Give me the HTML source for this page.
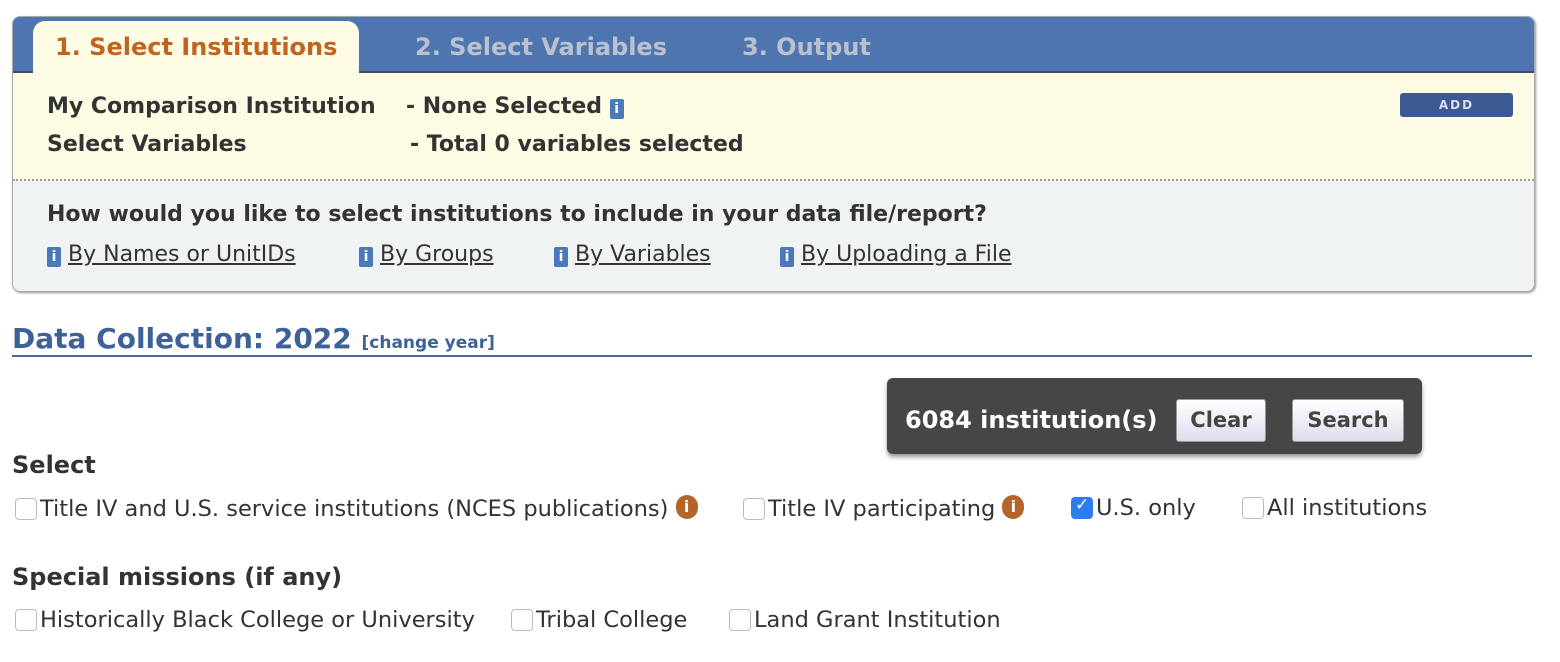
<!DOCTYPE html>
<html><head><style>
body{margin:0;width:1560px;height:662px;background:#fff;font-family:"DejaVu Sans","Liberation Sans",sans-serif;color:#333;position:relative;overflow:hidden}
.a{position:absolute;white-space:nowrap}
.b{font-weight:bold}
.box{position:absolute;left:12px;top:16px;width:1521px;height:274px;border:1px solid #aaa;border-radius:8px;overflow:hidden;background:#f0f3f4;box-shadow:1px 1px 2px #999}
.hdr{position:absolute;left:0;top:0;width:100%;height:54px;background:#4f75b0;border-bottom:2px solid #3a4f6e}
.tab{position:absolute;left:20px;top:4px;width:326px;height:54px;background:#fffce6;border-radius:12px 12px 0 0}
.yel{position:absolute;left:0;top:56px;width:100%;height:106px;background:#fffce6;border-bottom:2px dotted #999}
.ii{display:inline-block;width:14px;height:20px;background:#4a78b9;border-radius:2px;color:#fff;font-size:14px;line-height:20px;text-align:center;font-weight:bold;vertical-align:0}
.oi{display:inline-block;width:22px;height:24px;background:#b5642c;border-radius:11px;color:#fff;font-size:16px;line-height:24px;text-align:center;font-weight:bold}
.cb{display:inline-block;position:relative;width:20px;height:20px;border:1px solid #bbb;border-radius:4px;background:#fff;vertical-align:-4px;margin-right:3px}
a{color:#333}
.btn{position:absolute;top:399px;height:41px;background:linear-gradient(#fff,#dde);border:1px solid #999;border-radius:3px;font-weight:bold;font-size:21px;color:#444;text-align:center;line-height:40px}
.t{font-size:22.5px}
</style></head><body>
<div class="box">
 <div class="hdr"></div>
 <div class="tab"></div>
 <div class="yel"></div>
 <div class="a b" style="left:42px;top:16px;font-size:24px;color:#c0651f">1. Select Institutions</div>
 <div class="a b" style="left:402px;top:16px;font-size:24px;color:#b9c2cc">2. Select Variables</div>
 <div class="a b" style="left:729px;top:16px;font-size:24px;color:#b9c2cc">3. Output</div>
 <div class="a b" style="left:34px;top:77px;font-size:22px">My Comparison Institution</div>
 <div class="a b" style="left:393px;top:77px;font-size:22px">- None Selected <span class="ii">i</span></div>
 <div class="a b" style="left:34px;top:115px;font-size:22px">Select Variables</div>
 <div class="a b" style="left:397px;top:115px;font-size:22px">- Total 0 variables selected</div>
 <div class="a" style="left:1387px;top:76px;width:113px;height:24px;background:#3b5a94;border-radius:3px;color:#dde;font-size:12px;text-align:center;line-height:24px;letter-spacing:2px;font-weight:bold">ADD</div>
 <div class="a b" style="left:34px;top:185px;font-size:22px">How would you like to select institutions to include in your data file/report?</div>
 <div class="a" style="left:34px;top:225px;font-size:22px"><span class="ii">i</span> <a href="#">By Names or UnitIDs</a></div>
 <div class="a" style="left:346px;top:225px;font-size:22px"><span class="ii">i</span> <a href="#">By Groups</a></div>
 <div class="a" style="left:541px;top:225px;font-size:22px"><span class="ii">i</span> <a href="#">By Variables</a></div>
 <div class="a" style="left:767px;top:225px;font-size:22px"><span class="ii">i</span> <a href="#">By Uploading a File</a></div>
</div>
<div class="a b" style="left:12px;top:322px;font-size:28px;color:#3d6297">Data Collection: 2022 <span style="font-size:17px">[change year]</span></div>
<div class="a" style="left:12px;top:355px;width:1520px;height:2px;background:#4a6a9a"></div>
<div class="a" style="left:887px;top:378px;width:535px;height:76px;background:#464646;border-radius:6px;box-shadow:0 3px 4px #999"></div>
<div class="a b" style="left:905px;top:406px;font-size:24px;color:#fff">6084 institution(s)</div>
<div class="btn" style="left:1176px;width:88px">Clear</div>
<div class="btn" style="left:1292px;width:110px">Search</div>
<div class="a b" style="left:12px;top:451px;font-size:24px">Select</div>
<div class="a t" style="left:15px;top:495px"><span class="cb"></span>Title IV and U.S. service institutions (NCES publications) <span class="oi" style="vertical-align:4px">i</span></div>
<div class="a t" style="left:743px;top:495px"><span class="cb"></span>Title IV participating <span class="oi" style="vertical-align:4px">i</span></div>
<div class="a t" style="left:1071px;top:495px"><span class="cb" style="background:#2e7bf6;border-color:#2e7bf6"><span style="position:absolute;left:3px;top:-3px;color:#fff;font-size:17px">✓</span></span>U.S. only</div>
<div class="a t" style="left:1242px;top:495px"><span class="cb"></span>All institutions</div>
<div class="a b" style="left:12px;top:563px;font-size:24px">Special missions (if any)</div>
<div class="a t" style="left:15px;top:607px"><span class="cb"></span>Historically Black College or University</div>
<div class="a t" style="left:511px;top:607px"><span class="cb"></span>Tribal College</div>
<div class="a t" style="left:729px;top:607px"><span class="cb"></span>Land Grant Institution</div>
</body></html>
